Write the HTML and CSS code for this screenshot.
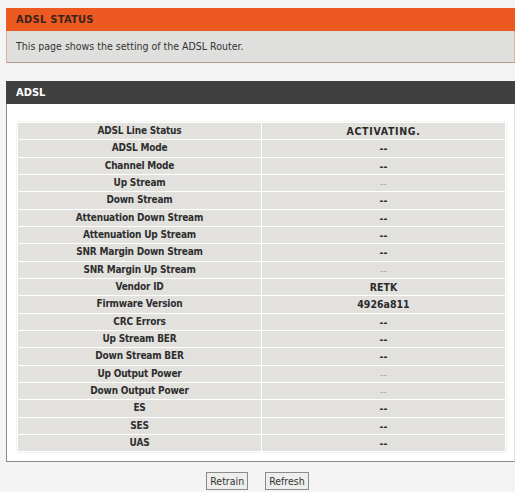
FILE: index.html
```html
<!DOCTYPE html>
<html>
<head>
<meta charset="utf-8">
<link rel="stylesheet" href="styles.css">
</head>
<body>
<div class="page">
  <div class="status-head">ADSL STATUS</div>
  <div class="status-body">This page shows the setting of the ADSL Router.</div>

  <div class="adsl-head">ADSL</div>
  <div class="adsl-body">
    <table class="info">
      <tr><td class="lbl">ADSL Line Status</td><td class="val wide">ACTIVATING.</td></tr>
      <tr><td class="lbl">ADSL Mode</td><td class="val">--</td></tr>
      <tr><td class="lbl">Channel Mode</td><td class="val">--</td></tr>
      <tr><td class="lbl">Up Stream</td><td class="val faint">--</td></tr>
      <tr><td class="lbl">Down Stream</td><td class="val">--</td></tr>
      <tr><td class="lbl">Attenuation Down Stream</td><td class="val">--</td></tr>
      <tr><td class="lbl">Attenuation Up Stream</td><td class="val">--</td></tr>
      <tr><td class="lbl">SNR Margin Down Stream</td><td class="val">--</td></tr>
      <tr><td class="lbl">SNR Margin Up Stream</td><td class="val faint">--</td></tr>
      <tr><td class="lbl">Vendor ID</td><td class="val">RETK</td></tr>
      <tr><td class="lbl">Firmware Version</td><td class="val">4926a811</td></tr>
      <tr><td class="lbl">CRC Errors</td><td class="val">--</td></tr>
      <tr><td class="lbl">Up Stream BER</td><td class="val">--</td></tr>
      <tr><td class="lbl">Down Stream BER</td><td class="val">--</td></tr>
      <tr><td class="lbl">Up Output Power</td><td class="val faint">--</td></tr>
      <tr><td class="lbl">Down Output Power</td><td class="val faint">--</td></tr>
      <tr><td class="lbl">ES</td><td class="val">--</td></tr>
      <tr><td class="lbl">SES</td><td class="val">--</td></tr>
      <tr><td class="lbl">UAS</td><td class="val">--</td></tr>
    </table>
  </div>

  <div class="buttons">
    <button class="btn">Retrain</button>
    <button class="btn">Refresh</button>
  </div>
</div>
</body>
</html>
```
FILE: styles.css
```css
html, body {
  margin: 0;
  padding: 0;
  background: #f4f4f4;
}
body {
  font-family: "DejaVu Sans", "Liberation Sans", sans-serif;
  font-stretch: condensed;
  color: #333;
}
.page {
  padding: 8px 0 0 6px;
}
.status-head {
  height: 23px;
  line-height: 23px;
  background: #ec5a22;
  color: #3a2418;
  font-weight: bold;
  font-size: 11px;
  padding-left: 10px;
  letter-spacing: 0.3px;
}
.status-body {
  height: 31px;
  line-height: 31px;
  background: #dfdfdd;
  border: 1px solid #d8b4a0;
  border-top: none;
  border-bottom-color: #b89a88;
  padding-left: 9px;
  font-size: 10.5px;
  color: #333;
}
.adsl-head {
  margin-top: 18px;
  height: 23px;
  line-height: 23px;
  background: #404040;
  color: #fff;
  font-weight: bold;
  font-size: 11px;
  padding-left: 10px;
}
.adsl-body {
  background: #fff;
  border: 1px solid #8a8a8a;
  border-top: none;
  border-right-color: #e0e0e0;
  padding: 18px 8px 9px 10px;
}
.info {
  width: 100%;
  border-collapse: separate;
  border-spacing: 1px;
  background: #fff;
  box-shadow: 0 0 2px #ddd;
}
.info td {
  background: #e2e1de;
  height: 16.33px;
  padding: 0;
  text-align: center;
  font-size: 10.5px;
  font-weight: bold;
  line-height: 16px;
}
.info td.lbl {
  width: 50%;
  color: #2e2e2e;
  font-size: 10px;
  letter-spacing: -0.2px;
}
.info td.val {
  color: #2a2a2a;
}
.info td.wide {
  letter-spacing: 0.7px;
}
.info td.faint {
  color: #aaa;
  font-weight: normal;
}
.buttons {
  display: flex;
  justify-content: center;
  gap: 17px;
  margin-top: 10px;
  padding-right: 6px;
}
.btn {
  font-family: "DejaVu Sans", sans-serif;
  font-stretch: condensed;
  font-size: 10.5px;
  color: #333;
  background: #eeeeec;
  border: 1px solid #8a8a8a;
  height: 18px;
  padding: 0 3px;
  margin: 0;
}
```
